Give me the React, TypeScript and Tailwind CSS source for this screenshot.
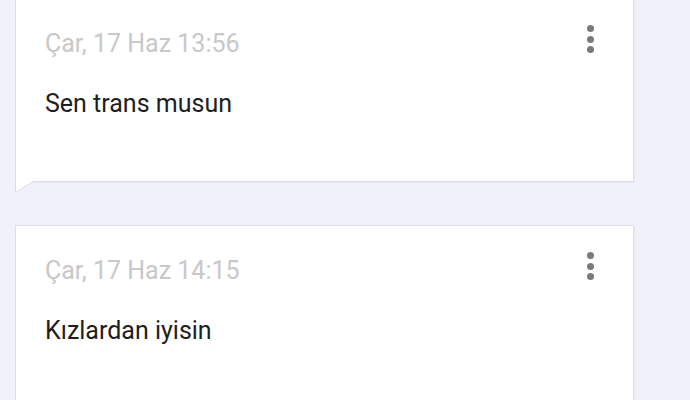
import { ReactNode } from "react";

interface MessageCardProps {
  date: string;
  text: string;
  tail?: boolean;
  first?: boolean;
}

function MoreDots() {
  return (
    <div className="flex flex-col items-center gap-[3.5px]">
      <span className="block h-[7px] w-[7px] rounded-full bg-[#7a7a7a]" />
      <span className="block h-[7px] w-[7px] rounded-full bg-[#7a7a7a]" />
      <span className="block h-[7px] w-[7px] rounded-full bg-[#7a7a7a]" />
    </div>
  );
}

function Tail() {
  return (
    <svg
      className="absolute left-[-1px] top-full"
      width="20"
      height="12"
      viewBox="0 0 20 12"
    >
      <path d="M0.5 0 L0.5 11.5 L19 0 Z" fill="#ffffff" />
      <path d="M0.5 0 L0.5 11.5 L19 0" fill="none" stroke="#dcdce4" strokeWidth="1" />
    </svg>
  );
}

function MessageCard({ date, text, tail, first }: MessageCardProps): ReactNode {
  return (
    <div
      className={`relative ml-[15px] w-[619px] border border-[#dedee6] bg-white shadow-[1px_1px_0_#e8e8ee] ${
        first ? "-mt-px h-[183px] border-t-0" : "h-[182px]"
      }`}
    >
      <div className="flex items-start justify-between pl-[29px] pr-[39px] pt-[26px]">
        <span className="mt-[3px] text-[25px] leading-[32px] text-[#c8c8c8]">{date}</span>
        <MoreDots />
      </div>
      <p className="mt-[28px] pl-[29px] text-[25px] leading-[32px] text-[#1e1e1e]">{text}</p>
      {tail && <Tail />}
    </div>
  );
}

export default function App() {
  return (
    <div
      className="h-[400px] w-[690px] overflow-hidden bg-[#f1f1f9]"
      style={{ fontFamily: "Roboto, 'Noto Sans', sans-serif" }}
    >
      <div className="flex flex-col gap-[43px]">
        <MessageCard first tail date="Çar, 17 Haz 13:56" text="Sen trans musun" />
        <MessageCard date="Çar, 17 Haz 14:15" text="Kızlardan iyisin" />
      </div>
    </div>
  );
}
